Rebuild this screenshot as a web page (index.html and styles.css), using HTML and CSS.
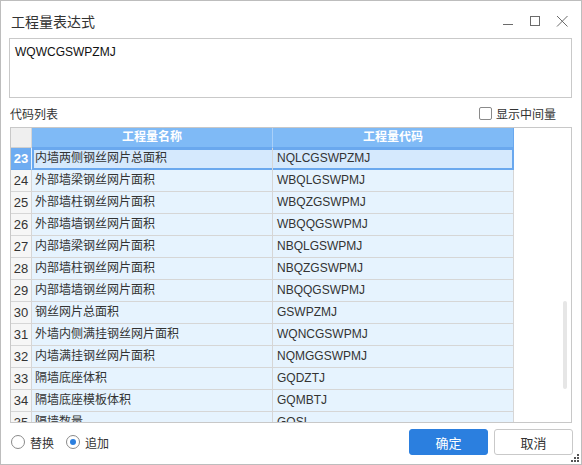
FILE: index.html
```html
<!DOCTYPE html>
<html lang="zh">
<head>
<meta charset="utf-8">
<title>工程量表达式</title>
<link rel="stylesheet" href="styles.css">
</head>
<body>
<div class="window">
  <div class="titlebar">
    <span class="title">工程量表达式</span>
    <div class="controls">
      <span class="ctl"><svg width="12" height="12" viewBox="0 0 12 12"><line x1="1" y1="9.5" x2="11" y2="9.5" stroke="#6b6b6b" stroke-width="1"/></svg></span>
      <span class="ctl"><svg width="12" height="12" viewBox="0 0 12 12"><rect x="1.5" y="1.5" width="9" height="9" fill="none" stroke="#6b6b6b" stroke-width="1"/></svg></span>
      <span class="ctl"><svg width="12" height="12" viewBox="0 0 12 12"><path d="M1 1 L11.5 11.5 M11.5 1 L1 11.5" stroke="#6b6b6b" stroke-width="1"/></svg></span>
    </div>
  </div>

  <div class="expr">WQWCGSWPZMJ</div>

  <div class="listbar">
    <span class="label">代码列表</span>
    <label class="check"><span class="box"></span>显示中间量</label>
  </div>

  <div class="tablewrap">
    <div class="grid">
      <div class="row head">
        <div class="idx"></div>
        <div class="name">工程量名称</div>
        <div class="code">工程量代码</div>
      </div>
      <div class="row sel">
        <div class="idx">23</div>
        <div class="cells"><div class="name">内墙两侧钢丝网片总面积</div><div class="code">NQLCGSWPZMJ</div></div>
      </div>
      <div class="row"><div class="idx">24</div><div class="cells"><div class="name">外部墙梁钢丝网片面积</div><div class="code">WBQLGSWPMJ</div></div></div>
      <div class="row"><div class="idx">25</div><div class="cells"><div class="name">外部墙柱钢丝网片面积</div><div class="code">WBQZGSWPMJ</div></div></div>
      <div class="row"><div class="idx">26</div><div class="cells"><div class="name">外部墙墙钢丝网片面积</div><div class="code">WBQQGSWPMJ</div></div></div>
      <div class="row"><div class="idx">27</div><div class="cells"><div class="name">内部墙梁钢丝网片面积</div><div class="code">NBQLGSWPMJ</div></div></div>
      <div class="row"><div class="idx">28</div><div class="cells"><div class="name">内部墙柱钢丝网片面积</div><div class="code">NBQZGSWPMJ</div></div></div>
      <div class="row"><div class="idx">29</div><div class="cells"><div class="name">内部墙墙钢丝网片面积</div><div class="code">NBQQGSWPMJ</div></div></div>
      <div class="row"><div class="idx">30</div><div class="cells"><div class="name">钢丝网片总面积</div><div class="code">GSWPZMJ</div></div></div>
      <div class="row"><div class="idx">31</div><div class="cells"><div class="name">外墙内侧满挂钢丝网片面积</div><div class="code">WQNCGSWPMJ</div></div></div>
      <div class="row"><div class="idx">32</div><div class="cells"><div class="name">内墙满挂钢丝网片面积</div><div class="code">NQMGGSWPMJ</div></div></div>
      <div class="row"><div class="idx">33</div><div class="cells"><div class="name">隔墙底座体积</div><div class="code">GQDZTJ</div></div></div>
      <div class="row"><div class="idx">34</div><div class="cells"><div class="name">隔墙底座模板体积</div><div class="code">GQMBTJ</div></div></div>
      <div class="row"><div class="idx">35</div><div class="cells"><div class="name">隔墙数量</div><div class="code">GQSL</div></div></div>
    </div>
    <div class="thumb"></div>
  </div>

  <div class="footer">
    <div class="radios">
      <label class="radio"><span class="circle"></span>替换</label>
      <label class="radio on"><span class="circle"></span>追加</label>
    </div>
    <div class="buttons">
      <button class="btn primary">确定</button>
      <button class="btn">取消</button>
    </div>
  </div>

  <svg class="grip" width="9" height="9" viewBox="0 0 9 9">
    <rect x="6" y="0" width="2" height="2" fill="#555"/>
    <rect x="3" y="3" width="2" height="2" fill="#555"/>
    <rect x="6" y="3" width="2" height="2" fill="#555"/>
    <rect x="0" y="6" width="2" height="2" fill="#555"/>
    <rect x="3" y="6" width="2" height="2" fill="#555"/>
    <rect x="6" y="6" width="2" height="2" fill="#555"/>
  </svg>
</div>
</body>
</html>
```

FILE: styles.css
```css
* { box-sizing: border-box; }
html, body { margin: 0; padding: 0; background: #fff; }
body {
  font-family: "Liberation Sans", "Noto Sans CJK SC", sans-serif;
  font-size: 12px;
  color: #333;
}
.window {
  position: relative;
  width: 582px;
  height: 465px;
  border: 1px solid #bdbdbd;
  background: #fff;
  display: flex;
  flex-direction: column;
}
.titlebar {
  height: 37px;
  flex: none;
  display: flex;
  align-items: center;
  padding: 3px 6px 0 10px;
}
.title { font-size: 14px; color: #333; flex: 1; }
.controls { display: flex; }
.ctl {
  width: 27px;
  height: 20px;
  display: flex;
  align-items: center;
  justify-content: center;
}
.ctl svg { display: block; }

.expr {
  flex: none;
  margin: 0 9px 0 8px;
  height: 60px;
  border: 1px solid #c9c9c9;
  padding: 5px 5px;
  line-height: 16px;
  font-size: 12px;
  color: #111;
}

.listbar {
  flex: none;
  height: 29px;
  display: flex;
  align-items: center;
  justify-content: space-between;
  padding: 1px 25px 0 9px;
}
.check { display: flex; align-items: center; gap: 4px; color: #333; }
.box {
  width: 13px;
  height: 13px;
  border: 1px solid #8a8a8a;
  border-radius: 2px;
  background: #fff;
}

.tablewrap {
  position: relative;
  flex: none;
  height: 296px;
  margin: 0 9px;
  border: 1px solid #c8c8c8;
  overflow: hidden;
  background: #fff;
}
.grid { width: 503px; }
.row { display: flex; height: 22px; }
.row .cells { display: flex; }
.idx {
  width: 21px;
  flex: none;
  background: #f6f6f6;
  border-right: 1px solid #d6d6d6;
  border-bottom: 1px solid #d6d6d6;
  text-align: center;
  font-size: 13px;
  line-height: 21px;
  color: #333;
}
.name, .code {
  height: 22px;
  background: #e6f3fe;
  border-right: 1px solid #d6d6d6;
  border-bottom: 1px solid #d6d6d6;
  line-height: 21px;
  white-space: nowrap;
  overflow: hidden;
  color: #333;
}
.name { width: 241px; padding-left: 3px; }
.code { width: 241px; padding-left: 4px; }

.row.head { height: 20px; }
.row.head .idx { background: #efefef; border-bottom: 1px solid #d0d0d0; line-height: 19px; }
.row.head .name, .row.head .code {
  height: 20px;
  background: #7fbaf6;
  color: #fff;
  font-weight: bold;
  text-align: center;
  padding-left: 0;
  line-height: 19px;
  border-right: 1px solid #a9d0f9;
  border-bottom: 1px solid #6aa8ee;
}
.row.head .code { border-right: 1px solid #6aa8ee; }

.row.sel .idx {
  background: #6eacf1;
  color: #fff;
  font-weight: bold;
  border-right: 1px solid #e6f3fe;
  border-bottom: 1px solid #6aa8ee;
}
.row.sel .cells {
  box-shadow: inset 0 0 0 2px #6aa8ee;
  height: 22px;
}
.row.sel .name, .row.sel .code {
  background: transparent;
  border-bottom: none;
}
.row.sel .code { border-right: none; }
.row.sel .cells { background: #d5e9fd; }

.thumb {
  position: absolute;
  left: 552px;
  top: 173px;
  width: 4px;
  height: 88px;
  background: #e6e6e6;
  border-radius: 2px;
}

.footer {
  flex: 1;
  display: flex;
  justify-content: space-between;
  padding: 6px 8px 0 10px;
}
.radios { display: flex; gap: 12px; height: 26px; align-items: center; padding-top: 0; }
.radio { display: flex; align-items: center; gap: 5px; color: #333; }
.circle {
  width: 14px;
  height: 14px;
  border: 1px solid #8a8a8a;
  border-radius: 50%;
  background: #fff;
  display: flex;
  align-items: center;
  justify-content: center;
}
.radio.on .circle::after {
  content: "";
  width: 6px;
  height: 6px;
  border-radius: 50%;
  background: #2b7fdf;
}
.buttons { display: flex; gap: 6px; }
.btn {
  width: 79px;
  height: 26px;
  border: 1px solid #c9c9c9;
  border-radius: 3px;
  background: #fff;
  color: #333;
  font-family: "Liberation Sans", "Noto Sans CJK SC", sans-serif;
  font-size: 13px;
  padding: 0;
}
.btn.primary {
  background: #2b7fdf;
  border-color: #2b7fdf;
  color: #fff;
}
.grip {
  position: absolute;
  right: 1px;
  bottom: 1px;
}
```
